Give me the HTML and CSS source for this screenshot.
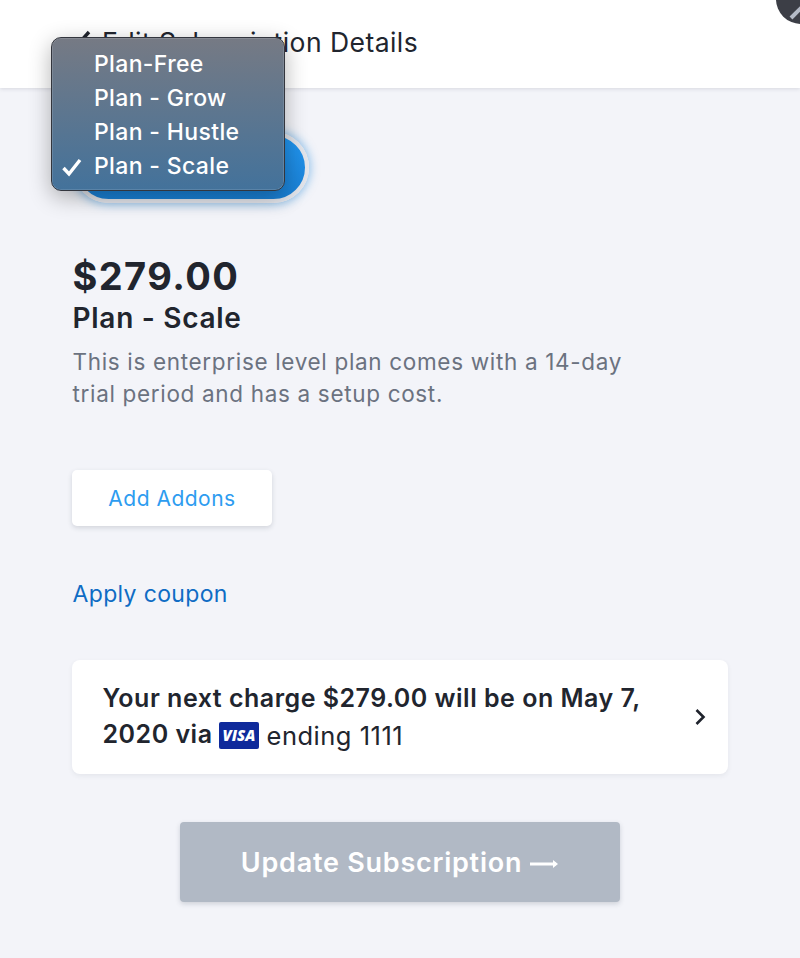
FILE: index.html
```html
<!DOCTYPE html>
<html lang="en">
<head>
<meta charset="utf-8">
<title>Edit Subscription Details</title>
<link rel="stylesheet" href="styles.css">
</head>
<body>
<div class="page">
  <header class="topbar">
    <svg class="back" width="16" height="26" viewBox="0 0 16 26"><path d="M13 3 4 13l9 10" fill="none" stroke="#21252e" stroke-width="3.4"/></svg>
    <h1 class="title">Edit Subscription Details</h1>
  </header>
  <main class="content">
    <div class="pill"></div>
    <div class="price">$279.00</div>
    <div class="plan">Plan - Scale</div>
    <p class="desc">This is enterprise level plan comes with a 14-day trial period and has a setup cost.</p>
    <button class="addons">Add Addons</button>
    <a class="coupon">Apply coupon</a>
    <section class="charge">
      <div class="charge-text"><b>Your next charge $279.00 will be on May 7, 2020 via</b> <svg class="visa" width="40" height="27" viewBox="0 0 40 27"><rect width="40" height="27" rx="2" fill="#0f2a9b"/><text x="20" y="19" text-anchor="middle" class="visa-text">VISA</text></svg> <span class="ending">ending 1111</span></div>
      <svg class="chev" width="12" height="18" viewBox="0 0 12 18"><path d="M2.500 2 9.500 9l-7 7" fill="none" stroke="#1f232c" stroke-width="2.600"/></svg>
    </section>
    <button class="update">Update Subscription <svg class="arrow" width="30" height="12" viewBox="0 0 30 12"><path d="M1 6h26" stroke="#fff" stroke-width="3"/><path d="M24 2 29 6 24 10z" fill="#fff"/></svg></button>
  </main>
  <div class="close"><svg width="30" height="30" viewBox="0 0 30 30"><path d="M15 18 29 4" stroke="#b4bac6" stroke-width="4"/></svg></div>
  <ul class="menu">
    <li>Plan-Free</li>
    <li>Plan - Grow</li>
    <li>Plan - Hustle</li>
    <li><svg class="tick" width="22" height="20" viewBox="0 0 22 20"><path d="M2.500 11 8 17 19 3" fill="none" stroke="#fff" stroke-width="3.400"/></svg>Plan - Scale</li>
  </ul>
</div>
</body>
</html>
```
FILE: styles.css
```css
* { box-sizing: border-box; }
html, body { margin: 0; padding: 0; }
body { font-family: Inter, "Liberation Sans", sans-serif; color: #21252e; background: #f3f4f9; }
.page { position: relative; width: 800px; height: 958px; overflow: hidden; background: #f3f4f9; }
.topbar { height: 88px; background: #fff; display: flex; align-items: center; padding-left: 76px; gap: 10px; box-shadow: 0 1px 4px rgba(40,50,70,.14); position: relative; }
.title { margin: 0 0 4px; font-size: 26.500px; font-weight: 400; color: #21252e; line-height: 1; letter-spacing: .45px; }
.back { flex: none; margin-bottom: 4px; }
.content { padding: 44px 0 0 72.500px; }
.pill { width: 236px; height: 71px; border-radius: 36px; background: linear-gradient(#2196f0, #1a7fd3); border: 4px solid #e2e4ea; box-shadow: 0 0 8px 2px rgba(66,153,225,.5); }
.price { margin-top: 52px; font-size: 38px; font-weight: 700; line-height: 42px; letter-spacing: 1.4px; }
.plan { font-size: 28px; font-weight: 600; line-height: 36px; margin-top: 3px; letter-spacing: .72px; }
.desc { margin: 10px 0 0; width: 560px; font-size: 22.500px; line-height: 32px; color: #6b7280; letter-spacing: .67px; }
.addons { display: block; margin-top: 60px; margin-left: -.5px; width: 200px; height: 56px; background: #fff; border: 0; border-radius: 5px; box-shadow: 0 2px 5px rgba(40,50,70,.16); font: 400 21px Inter, sans-serif; letter-spacing: .5px; color: #2d9cf0; }
.coupon { display: block; margin-top: 53px; font-size: 23px; line-height: 30px; color: #0f6cc4; letter-spacing: .35px; }
.charge { margin-top: 51px; margin-left: -.5px; width: 656px; height: 114px; background: #fff; border-radius: 8px; box-shadow: 0 2px 5px rgba(40,50,70,.07); display: flex; align-items: center; justify-content: space-between; padding: 0 22px 0 30.500px; }
.charge-text { width: 560px; font-size: 25px; line-height: 36px; letter-spacing: .5px; }
.charge-text b { font-weight: 600; }
.visa { vertical-align: -6px; margin-left: -1px; }
.ending { font-size: 25.500px; vertical-align: -2px; }
.visa-text { font: italic 800 15px "Open Sans", sans-serif; fill: #fff; letter-spacing: 0; }
.update { display: flex; align-items: center; justify-content: center; gap: 7px; margin: 48px 0 0 107.500px; width: 440px; height: 80px; background: #b1b9c5; border: 0; border-radius: 4px; box-shadow: 0 2px 5px rgba(40,50,70,.18); font: 600 27px Inter, sans-serif; letter-spacing: .75px; color: #fff; }
.arrow { margin-top: 4px; }
.close { position: absolute; left: 776px; top: -26px; width: 50px; height: 50px; border-radius: 50%; background: #3c3e46; }
.close svg { position: absolute; left: 0; top: 26px; }
.menu { position: absolute; left: 51px; top: 37px; width: 234px; height: 154px; margin: 0; padding: 9px 0 0 42px; list-style: none; border-radius: 10px; border: 1px solid #33363e; background: linear-gradient(#767a84, #43729b); box-shadow: 0 0 0 .5px rgba(255,255,255,.25) inset, 0 6px 22px rgba(0,0,0,.3); color: #fff; font-size: 23px; font-weight: 500; letter-spacing: .35px; }
.menu li { position: relative; height: 34px; line-height: 34px; }
.tick { position: absolute; left: -33px; top: 8px; }
```
